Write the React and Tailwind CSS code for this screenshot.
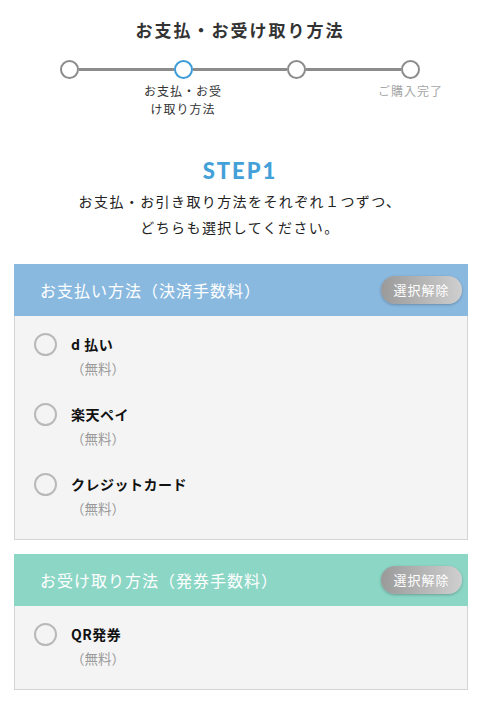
import { useState } from "react";

const jp = { fontFamily: '"Noto Sans CJK JP", "Noto Sans", sans-serif' };

const steps = [
  { label: "", active: false },
  { label: "お支払・お受け取り方法", active: true },
  { label: "", active: false },
  { label: "ご購入完了", active: false, done: true },
];

function Stepper() {
  return (
    <div className="w-[455px] mx-auto mt-[18px] grid grid-cols-4">
      {steps.map((s, i) => (
        <div key={i} className="flex flex-col items-center">
          <div className="flex items-center w-full">
            <div className={`flex-1 h-[3px] ${i === 0 ? "bg-transparent" : "bg-[#8c8c8c]"}`}></div>
            <div
              className={`w-[19px] h-[19px] rounded-full border-[2.5px] bg-white shrink-0 ${
                s.active ? "border-[#3d9bd7]" : "border-[#8c8c8c]"
              }`}
            ></div>
            <div className={`flex-1 h-[3px] ${i === 3 ? "bg-transparent" : "bg-[#8c8c8c]"}`}></div>
          </div>
          <div
            className={`w-[80px] mt-[3px] text-center text-[12px] leading-[18px] tracking-[1px] ${
              s.done ? "text-[#a5a5a5]" : "text-[#333]"
            }`}
          >
            {s.label}
          </div>
        </div>
      ))}
    </div>
  );
}

function Option({ name, checked, onClick }) {
  return (
    <button onClick={onClick} className="flex items-start gap-[14px] text-left">
      <span
        className={`w-[23px] h-[23px] rounded-full border-[2.5px] shrink-0 ${
          checked ? "border-[#3d9bd7] bg-[#3d9bd7]" : "border-[#b9b9b9] bg-[#f4f4f4]"
        }`}
      ></span>
      <span className="flex flex-col">
        <span className="text-[14px] leading-[22px] font-bold text-[#111] tracking-[0.5px]">{name}</span>
        <span className="text-[13.5px] leading-[22px] mt-[2px] text-[#9a9a9a]">（無料）</span>
      </span>
    </button>
  );
}

function Panel({ title, color, options, value, setValue }) {
  return (
    <div className="mx-[14px] w-[454px]">
      <div className={`h-[52px] flex items-center justify-between pl-[26px] pr-[6px] ${color}`}>
        <span className="text-white text-[16px] leading-[22px] tracking-[1px]">{title}</span>
        <button
          onClick={() => setValue(null)}
          className="w-[81px] h-[28px] rounded-full bg-linear-to-r from-[#9a9a9a] to-[#cfcfcf] text-white text-[13px] tracking-[1px] shadow-[0_1px_3px_rgba(0,0,0,0.25)]"
        >
          選択解除
        </button>
      </div>
      <div className="bg-[#f4f4f4] border border-t-0 border-[#d4d4d4] pl-[19px] pt-[17px] pb-[20px] flex flex-col gap-[24px]">
        {options.map((o) => (
          <Option key={o} name={o} checked={value === o} onClick={() => setValue(o)} />
        ))}
      </div>
    </div>
  );
}

export default function App() {
  const [pay, setPay] = useState(null);
  const [recv, setRecv] = useState(null);
  return (
    <div className="w-[480px] min-h-[704px] bg-white pt-[18px] pb-[14px]" style={jp}>
      <h1 className="text-center text-[17px] leading-[24px] font-bold tracking-[2px] text-[#333]">
        お支払・お受け取り方法
      </h1>
      <Stepper />
      <div
        className="mt-[39px] text-center text-[22px] leading-[28px] font-black tracking-[2px] text-[#44a0d8]"
        style={{ fontFamily: "Lato, sans-serif" }}
      >
        STEP1
      </div>
      <p className="mt-[3px] text-center text-[14px] leading-[26px] tracking-[1.4px] text-[#222]">
        お支払・お引き取り方法をそれぞれ１つずつ、
        <br />
        どちらも選択してください。
      </p>
      <div className="mt-[24px] flex flex-col gap-[14px]">
        <Panel
          title="お支払い方法（決済手数料）"
          color="bg-[#8ab9e0]"
          options={["d 払い", "楽天ペイ", "クレジットカード"]}
          value={pay}
          setValue={setPay}
        />
        <Panel
          title="お受け取り方法（発券手数料）"
          color="bg-[#8cd6c6]"
          options={["QR発券"]}
          value={recv}
          setValue={setRecv}
        />
      </div>
    </div>
  );
}
